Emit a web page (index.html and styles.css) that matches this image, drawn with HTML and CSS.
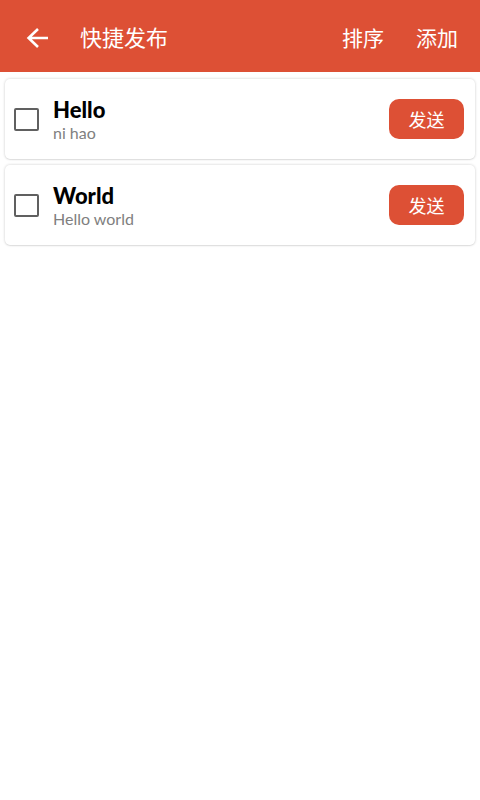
FILE: index.html
```html
<!DOCTYPE html>
<html lang="zh-CN">
<head>
    <meta charset="UTF-8">
    <meta name="viewport" content="width=device-width, initial-scale=1.0">
    <title>快捷发布</title>
    <link rel="stylesheet" href="styles.css">
</head>
<body>

    <!-- Top bar -->
    <header class="toolbar">
        <button type="button" class="back-btn" aria-label="返回">
            <svg width="22" height="22" viewBox="0 0 22 22" fill="none" stroke="currentColor" stroke-width="2.6">
                <path d="M22 11H2.500M12 2L2.600 11l9.400 9" />
            </svg>
        </button>
        <h1>快捷发布</h1>
        <button type="button" class="action-btn">排序</button>
        <button type="button" class="action-btn">添加</button>
    </header>

    <!-- Message list -->
    <main class="list">
        <div class="card">
            <input type="checkbox" class="check" id="item-hello">
            <label class="info" for="item-hello">
                <span class="name">Hello</span>
                <span class="message">ni hao</span>
            </label>
            <button type="button" class="send-btn">发送</button>
        </div>
        <div class="card">
            <input type="checkbox" class="check" id="item-world">
            <label class="info" for="item-world">
                <span class="name">World</span>
                <span class="message">Hello world</span>
            </label>
            <button type="button" class="send-btn">发送</button>
        </div>
    </main>

</body>
</html>
```

FILE: styles.css
```css
body {
    margin: 0;
    background-color: white;
    font-family: Lato, "Noto Sans CJK SC", sans-serif;
}
button {
    border: none;
    padding: 0;
    color: white;
    font-family: inherit;
    cursor: pointer;
}
.toolbar {
    display: flex;
    align-items: center;
    gap: 32px;
    height: 72px;
    padding: 3px 22px 0 26px;
    box-sizing: border-box;
    background-color: #dd5035;
    color: white;
}
.toolbar h1 {
    flex-grow: 1;
    margin: 0;
    font-size: 22px;
    font-weight: 400;
    line-height: 32px;
}
.back-btn {
    display: flex;
    background: none;
}
.action-btn {
    background: none;
    font-size: 21px;
    line-height: 32px;
}
.list {
    display: flex;
    flex-direction: column;
    gap: 6px;
    padding: 7px 5px;
}
.card {
    display: flex;
    align-items: center;
    gap: 14px;
    padding: 15px 11px 15px 9px;
    border-radius: 5px;
    box-shadow: 0 0 3px rgba(0, 0, 0, 0.2), 0 1px 1px rgba(0, 0, 0, 0.06);
}
.check {
    appearance: none;
    width: 25px;
    height: 23px;
    margin: 0;
    border: 2px solid #606060;
    border-radius: 2px;
    cursor: pointer;
}
.check:checked {
    background-color: #dd5035;
}
.info {
    display: flex;
    flex-direction: column;
    flex-grow: 1;
    padding-top: 4px;
}
.name {
    color: black;
    font-size: 22px;
    font-weight: 900;
    line-height: 24px;
}
.message {
    color: #808080;
    font-size: 16px;
    line-height: 22px;
}
.send-btn {
    width: 75px;
    height: 40px;
    border-radius: 10px;
    background-color: #dd5035;
    font-size: 18px;
}
```
